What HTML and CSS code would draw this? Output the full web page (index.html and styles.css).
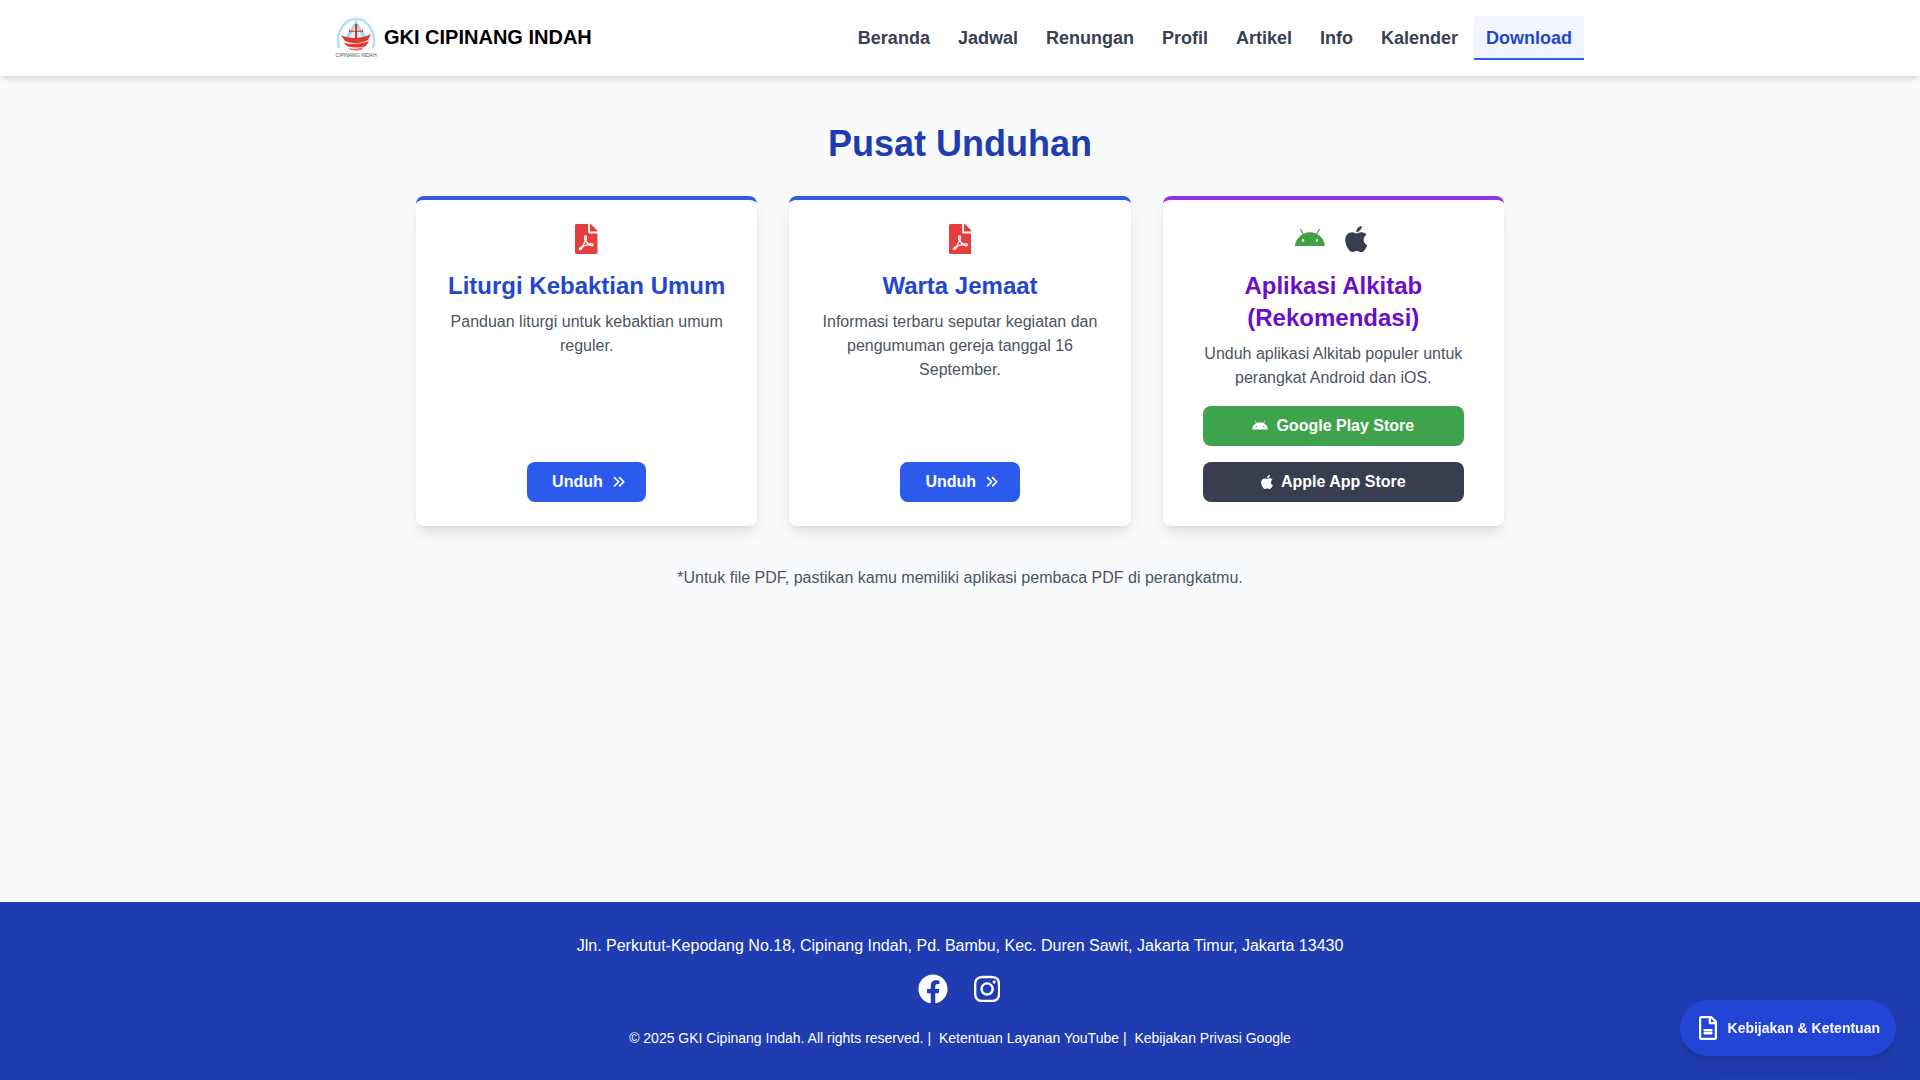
FILE: index.html
```html
<!DOCTYPE html>
<html lang="id">
<head>
<meta charset="UTF-8" />
<meta name="viewport" content="width=device-width, initial-scale=1" />
<title>Pusat Unduhan - GKI Cipinang Indah</title>
<link rel="stylesheet" href="styles.css">
</head>
<body>

<header class="site-header">
  <div class="header-inner">
    <a class="brand" href="#">
      <span class="brand-logo">
        <svg class="logo-mark" viewBox="0 0 40 34" aria-hidden="true">
          <path d="M3 30C-1 15 8 1 20 1s21 14 17 29" fill="none" stroke="#b9def3" stroke-width="2.5"/>
          <path d="M8 22L20 2l12 20z" fill="#a6d6f0"/>
          <path d="M13 20L20 8l7 12z" fill="#dff1fa"/>
          <path d="M19 6h2.2v15H19zM13 11.5l1.5 1.2h11l1.5-1.2v3l-1.5-.8h-11l-1.500.8z" fill="#d9362b"/>
          <path d="M5 17c8 4 20 4 30-1l-3 6c-8 4-16 4-23 1z" fill="#e2392e"/>
          <path d="M8 25c8 2 17 1 25-2l-3 5c-7 2-13 2-19 0z" fill="#e2392e"/>
          <path d="M12 30c5 1 11 1 16-1l-3 3c-3 .6-7 .6-10 0z" fill="#ea6a5f"/>
        </svg>
        <span class="logo-caption">CIPINANG INDAH</span>
      </span>
      <span class="brand-name">GKI CIPINANG INDAH</span>
    </a>
    <nav class="main-nav">
      <a href="#">Beranda</a>
      <a href="#">Jadwal</a>
      <a href="#">Renungan</a>
      <a href="#">Profil</a>
      <a href="#">Artikel</a>
      <a href="#">Info</a>
      <a href="#">Kalender</a>
      <a href="#" class="active">Download</a>
    </nav>
  </div>
</header>

<main class="page">
  <h1>Pusat Unduhan</h1>

  <div class="card-grid">
    <section class="card">
      <div class="card-icons">
        <svg class="icon-pdf" viewBox="0 0 384 512" aria-hidden="true"><path d="M181.9 256.1c-5-16-4.9-46.9-2-46.9 8.4 0 7.6 36.9 2 46.9zm-1.7 47.2c-7.7 20.2-17.3 43.3-28.4 62.7 18.3-7 39-17.2 62.9-21.9-12.7-9.6-24.9-23.4-34.5-40.8zM86.1 428.1c0 .8 13.2-5.4 34.9-40.2-6.7 6.3-29.1 24.5-34.9 40.2zM248 160h136v328c0 13.3-10.7 24-24 24H24c-13.3 0-24-10.7-24-24V24C0 10.7 10.7 0 24 0h200v136c0 13.2 10.8 24 24 24zm-8 171.8c-20-12.2-33.3-29-42.7-53.8 4.5-18.5 11.6-46.6 6.2-64.2-4.7-29.4-42.4-26.5-47.8-6.8-5 18.3-.4 44.1 8.1 77-11.6 27.6-28.7 64.6-40.8 85.8-.1 0-.1.1-.2.1-27.1 13.9-73.6 44.5-54.5 68 5.6 6.9 16 10 21.5 10 17.9 0 35.7-18 61.1-61.8 25.8-8.5 54.1-19.1 79-23.2 21.7 11.8 47.1 19.5 64 19.5 29.2 0 31.2-32 19.7-43.4-13.9-13.6-54.3-9.7-73.6-7.2zM377 105L279 7c-4.5-4.5-10.6-7-17-7h-6v128h128v-6.1c0-6.3-2.5-12.4-7-16.9zm-74.1 255.3c4.1-2.7-2.5-11.9-42.8-9 37.1 15.8 42.8 9 42.8 9z"/></svg>
      </div>
      <h2>Liturgi Kebaktian Umum</h2>
      <p>Panduan liturgi untuk kebaktian umum reguler.</p>
      <div class="card-actions">
        <a href="#" class="btn btn-blue">Unduh
          <svg class="icon-angles" viewBox="0 0 512 512" aria-hidden="true"><path d="M470.6 278.6c12.5-12.5 12.5-32.8 0-45.3l-160-160c-12.5-12.5-32.8-12.5-45.3 0s-12.5 32.8 0 45.3L402.7 256 265.4 393.4c-12.5 12.5-12.5 32.8 0 45.3s32.8 12.5 45.3 0l160-160zm-352 160l160-160c12.5-12.5 12.5-32.8 0-45.3l-160-160c-12.5-12.5-32.8-12.5-45.3 0s-12.5 32.8 0 45.3L210.7 256 73.4 393.4c-12.5 12.5-12.5 32.8 0 45.3s32.8 12.5 45.3 0z"/></svg>
        </a>
      </div>
    </section>

    <section class="card">
      <div class="card-icons">
        <svg class="icon-pdf" viewBox="0 0 384 512" aria-hidden="true"><path d="M181.9 256.1c-5-16-4.9-46.9-2-46.9 8.4 0 7.6 36.9 2 46.9zm-1.7 47.2c-7.7 20.2-17.3 43.3-28.4 62.7 18.3-7 39-17.2 62.9-21.9-12.7-9.6-24.9-23.4-34.5-40.8zM86.1 428.1c0 .8 13.2-5.4 34.9-40.2-6.7 6.3-29.1 24.5-34.9 40.2zM248 160h136v328c0 13.3-10.7 24-24 24H24c-13.3 0-24-10.7-24-24V24C0 10.7 10.7 0 24 0h200v136c0 13.2 10.8 24 24 24zm-8 171.8c-20-12.2-33.3-29-42.7-53.8 4.5-18.5 11.6-46.6 6.2-64.2-4.7-29.4-42.4-26.5-47.8-6.8-5 18.3-.4 44.1 8.1 77-11.6 27.6-28.7 64.6-40.8 85.8-.1 0-.1.1-.2.1-27.1 13.9-73.6 44.5-54.5 68 5.6 6.9 16 10 21.5 10 17.9 0 35.7-18 61.1-61.8 25.8-8.5 54.1-19.1 79-23.2 21.7 11.8 47.1 19.5 64 19.5 29.2 0 31.2-32 19.7-43.4-13.9-13.6-54.3-9.7-73.6-7.2zM377 105L279 7c-4.5-4.5-10.6-7-17-7h-6v128h128v-6.1c0-6.3-2.5-12.4-7-16.9zm-74.1 255.3c4.1-2.7-2.5-11.9-42.8-9 37.1 15.8 42.8 9 42.8 9z"/></svg>
      </div>
      <h2>Warta Jemaat</h2>
      <p>Informasi terbaru seputar kegiatan dan pengumuman gereja tanggal 16 September.</p>
      <div class="card-actions">
        <a href="#" class="btn btn-blue">Unduh
          <svg class="icon-angles" viewBox="0 0 512 512" aria-hidden="true"><path d="M470.6 278.6c12.5-12.5 12.5-32.8 0-45.3l-160-160c-12.5-12.5-32.8-12.5-45.3 0s-12.5 32.8 0 45.3L402.7 256 265.4 393.4c-12.5 12.5-12.5 32.8 0 45.3s32.8 12.5 45.3 0l160-160zm-352 160l160-160c12.5-12.5 12.5-32.8 0-45.3l-160-160c-12.5-12.5-32.8-12.5-45.3 0s-12.5 32.8 0 45.3L210.7 256 73.4 393.4c-12.5 12.5-12.5 32.8 0 45.3s32.8 12.5 45.3 0z"/></svg>
        </a>
      </div>
    </section>

    <section class="card card-purple">
      <div class="card-icons app-icons">
        <svg class="icon-android" viewBox="0 0 576 512" aria-hidden="true"><path d="M420.55,301.93a24,24,0,1,1,24-24,24,24,0,0,1-24,24m-265.1,0a24,24,0,1,1,24-24,24,24,0,0,1-24,24m273.7-144.48,47.94-83a10,10,0,1,0-17.27-10h0l-48.54,84.07a301.25,301.25,0,0,0-246.56,0L116.18,64.45a10,10,0,1,0-17.27,10h0l47.94,83C64.53,202.22,8.24,285.55,0,384H576c-8.24-98.45-64.54-181.78-146.85-226.55"/></svg>
        <svg class="icon-apple" viewBox="0 0 384 512" aria-hidden="true"><path d="M318.7 268.7c-.2-36.7 16.4-64.4 50-84.8-18.8-26.9-47.2-41.7-84.7-44.6-35.5-2.8-74.3 20.7-88.5 20.7-15 0-49.4-19.7-76.4-19.7C63.3 141.2 4 184.8 4 273.5q0 39.3 14.4 81.2c12.8 36.7 59 126.7 107.2 125.2 25.2-.6 43-17.9 75.8-17.9 31.8 0 48.3 17.9 76.4 17.9 48.6-.7 90.4-82.5 102.6-119.3-65.2-30.7-61.7-90-61.7-91.9zm-56.6-164.2c27.3-32.4 24.8-61.9 24-72.5-24.1 1.4-52 16.4-67.9 34.9-17.5 19.8-27.8 44.3-25.6 71.9 26.1 2 49.9-11.4 69.5-34.3z"/></svg>
      </div>
      <h2>Aplikasi Alkitab (Rekomendasi)</h2>
      <p>Unduh aplikasi Alkitab populer untuk perangkat Android dan iOS.</p>
      <div class="card-actions stacked">
        <a href="#" class="btn btn-green">
          <svg class="btn-android" viewBox="0 0 576 512" aria-hidden="true"><path d="M420.55,301.93a24,24,0,1,1,24-24,24,24,0,0,1-24,24m-265.1,0a24,24,0,1,1,24-24,24,24,0,0,1-24,24m273.7-144.48,47.94-83a10,10,0,1,0-17.27-10h0l-48.54,84.07a301.25,301.25,0,0,0-246.56,0L116.18,64.45a10,10,0,1,0-17.27,10h0l47.94,83C64.53,202.22,8.24,285.55,0,384H576c-8.24-98.45-64.54-181.78-146.85-226.55"/></svg>
          Google Play Store
        </a>
        <a href="#" class="btn btn-dark">
          <svg class="btn-apple" viewBox="0 0 384 512" aria-hidden="true"><path d="M318.7 268.7c-.2-36.7 16.4-64.4 50-84.8-18.8-26.9-47.2-41.7-84.7-44.6-35.5-2.8-74.3 20.7-88.5 20.7-15 0-49.4-19.7-76.4-19.7C63.3 141.2 4 184.8 4 273.5q0 39.3 14.4 81.2c12.8 36.7 59 126.7 107.2 125.2 25.2-.6 43-17.9 75.8-17.9 31.8 0 48.3 17.9 76.4 17.9 48.6-.7 90.4-82.5 102.6-119.3-65.2-30.7-61.7-90-61.7-91.9zm-56.6-164.2c27.3-32.4 24.8-61.9 24-72.5-24.1 1.4-52 16.4-67.9 34.9-17.5 19.8-27.8 44.3-25.6 71.9 26.1 2 49.9-11.4 69.5-34.3z"/></svg>
          Apple App Store
        </a>
      </div>
    </section>
  </div>

  <p class="note">*Untuk file PDF, pastikan kamu memiliki aplikasi pembaca PDF di perangkatmu.</p>
</main>

<footer class="site-footer">
  <p class="address">Jln. Perkutut-Kepodang No.18, Cipinang Indah, Pd. Bambu, Kec. Duren Sawit, Jakarta Timur, Jakarta 13430</p>
  <div class="social">
    <a href="#" aria-label="Facebook"><svg class="icon-fb" viewBox="0 0 512 512" aria-hidden="true"><path d="M504 256C504 119 393 8 256 8S8 119 8 256c0 123.78 90.69 226.38 209.25 245V327.69h-63V256h63v-54.64c0-62.15 37-96.48 93.67-96.48 27.14 0 55.52 4.84 55.52 4.84v61h-31.28c-30.8 0-40.41 19.12-40.41 38.73V256h68.78l-11 71.69h-57.78V501C413.31 482.38 504 379.78 504 256z"/></svg></a>
    <a href="#" aria-label="Instagram"><svg class="icon-ig" viewBox="0 0 448 512" aria-hidden="true"><path d="M224.1 141c-63.6 0-114.9 51.3-114.9 114.9s51.3 114.9 114.9 114.9S339 319.5 339 255.9 287.7 141 224.1 141zm0 189.6c-41.1 0-74.7-33.5-74.7-74.7s33.5-74.7 74.7-74.7 74.7 33.5 74.7 74.7-33.6 74.7-74.7 74.7zm146.4-194.3c0 14.9-12 26.8-26.8 26.8-14.9 0-26.8-12-26.8-26.8s12-26.8 26.8-26.8 26.8 12 26.8 26.8zm76.1 27.2c-1.7-35.9-9.9-67.7-36.2-93.9-26.2-26.2-58-34.4-93.9-36.2-37-2.1-147.9-2.1-184.9 0-35.8 1.7-67.6 9.9-93.9 36.1s-34.4 58-36.2 93.9c-2.1 37-2.1 147.9 0 184.9 1.7 35.9 9.9 67.7 36.2 93.9s58 34.4 93.9 36.2c37 2.1 147.9 2.1 184.9 0 35.9-1.7 67.7-9.9 93.9-36.2 26.2-26.2 34.4-58 36.2-93.9 2.1-37 2.1-147.8 0-184.8zM398.8 388c-7.8 19.6-22.9 34.7-42.6 42.6-29.5 11.7-99.5 9-132.1 9s-102.7 2.6-132.1-9c-19.6-7.8-34.7-22.9-42.6-42.6-11.7-29.5-9-99.5-9-132.1s-2.6-102.7 9-132.1c7.8-19.6 22.9-34.7 42.6-42.6 29.5-11.7 99.5-9 132.1-9s102.7-2.6 132.1 9c19.6 7.8 34.7 22.9 42.6 42.6 11.7 29.5 9 99.5 9 132.1s2.7 102.7-9 132.1z"/></svg></a>
  </div>
  <p class="legal">
    <span>&copy; 2025 GKI Cipinang Indah. All rights reserved. |</span>
    <a href="#">Ketentuan Layanan YouTube</a>
    <span>|</span>
    <a href="#">Kebijakan Privasi Google</a>
  </p>
</footer>

<a href="#" class="policy-btn">
  <svg class="icon-doc" viewBox="0 0 384 512" aria-hidden="true"><path d="M369.9 97.9L286 14C277 5 264.8-.1 252.1-.1H48C21.5 0 0 21.5 0 48v416c0 26.5 21.5 48 48 48h288c26.5 0 48-21.5 48-48V131.9c0-12.7-5.1-25-14.1-34zM332.1 128H256V51.9l76.1 76.1zM48 464V48h160v104c0 13.3 10.7 24 24 24h104v288H48zm240-176v28c0 6.6-5.4 12-12 12H108c-6.6 0-12-5.4-12-12v-28c0-6.6 5.4-12 12-12h168c6.6 0 12 5.4 12 12zm0 64v28c0 6.6-5.4 12-12 12H108c-6.6 0-12-5.4-12-12v-28c0-6.6 5.4-12 12-12h168c6.6 0 12 5.4 12 12z"/></svg>
  Kebijakan &amp; Ketentuan
</a>

</body>
</html>
```

FILE: styles.css
```css
* {
  box-sizing: border-box;
}
body {
  margin: 0;
  min-height: 100vh;
  display: flex;
  flex-direction: column;
  font-family: "Liberation Sans", Arial, sans-serif;
  font-size: 16px;
  line-height: 24px;
  background: #f9fafc;
  color: #374151;
}
a {
  text-decoration: none;
  color: inherit;
}
h1, h2, p {
  margin: 0;
}

/* header */
.site-header {
  background: #fff;
  box-shadow: 0 4px 6px -1px rgba(0,0,0,0.1), 0 2px 4px -2px rgba(0,0,0,0.1);
}
.header-inner {
  max-width: 1280px;
  margin: 0 auto;
  padding: 16px;
  display: flex;
  align-items: center;
  justify-content: space-between;
  height: 76px;
}
.brand {
  display: flex;
  align-items: center;
  gap: 8px;
}
.brand-logo {
  width: 40px;
  height: 40px;
  display: flex;
  flex-direction: column;
  align-items: center;
}
.logo-mark {
  width: 40px;
  height: 34px;
  display: block;
}
.logo-caption {
  font-size: 5px;
  line-height: 6px;
  color: #555;
  white-space: nowrap;
}
.brand-name {
  font-size: 20px;
  line-height: 28px;
  font-weight: bold;
  color: #000;
  padding-bottom: 2px;
}
.main-nav {
  display: flex;
  gap: 4px;
}
.main-nav a {
  padding: 8px 12px;
  height: 44px;
  font-size: 18px;
  line-height: 28px;
  font-weight: bold;
  color: #374151;
  border-bottom: 2px solid transparent;
}
.main-nav a.active {
  color: #2447cc;
  background: #f0f5fe;
  border-bottom-color: #2f5be6;
  border-radius: 4px 4px 0 0;
}

/* content */
.page {
  flex: 1;
  width: 100%;
  max-width: 1152px;
  margin: 0 auto;
  padding: 48px 32px;
}
.page h1 {
  font-size: 36px;
  line-height: 40px;
  font-weight: bold;
  color: #1f3cb0;
  text-align: center;
  margin-bottom: 32px;
}
.card-grid {
  display: grid;
  grid-template-columns: repeat(3, 1fr);
  gap: 32px;
}
.card {
  background: #fff;
  border-top: 4px solid #2f5be6;
  border-radius: 8px;
  box-shadow: 0 10px 15px -3px rgba(0,0,0,0.1), 0 4px 6px -4px rgba(0,0,0,0.1);
  padding: 24px;
  display: flex;
  flex-direction: column;
  align-items: center;
  text-align: center;
}
.card-purple {
  border-top-color: #9333ea;
}
.card h2 {
  font-size: 24px;
  line-height: 32px;
  font-weight: bold;
  color: #2447cc;
  margin-bottom: 8px;
}
.card-purple h2 {
  color: #6b0fc4;
}
.card p {
  color: #4b5563;
}
.card-icons {
  height: 30px;
  margin-bottom: 16px;
  display: flex;
  align-items: center;
  justify-content: center;
}
.app-icons {
  gap: 20px;
  padding-right: 4px;
}
.card-icons svg {
  display: block;
}
.icon-pdf {
  width: 22.5px;
  height: 30px;
  fill: #e53e3e;
}
.icon-android {
  width: 30px;
  height: 26.67px;
  fill: #43a047;
}
.icon-apple {
  width: 22.5px;
  height: 30px;
  fill: #383e50;
}
.card-actions {
  margin-top: auto;
  padding-top: 16px;
  width: 100%;
  display: flex;
  flex-direction: column;
  align-items: center;
  gap: 16px;
}
.btn {
  height: 40px;
  padding: 0 24px;
  border-radius: 8px;
  color: #fff;
  font-weight: bold;
  display: inline-flex;
  align-items: center;
  justify-content: center;
}
.stacked .btn {
  width: 100%;
  max-width: 261px;
  gap: 8px;
}
.btn-blue {
  background: #2b5aec;
  padding: 0 21px 0 25px;
}
.btn-green {
  background: #3fa34d;
}
.btn-dark {
  background: #383e50;
}
.icon-angles {
  width: 13.5px;
  height: 13.5px;
  margin-left: 9px;
  fill: #fff;
}
.btn-android {
  width: 16px;
  height: 14px;
  fill: #fff;
}
.btn-apple {
  width: 12px;
  height: 16px;
  fill: #fff;
}
.note {
  margin-top: 40px;
  text-align: center;
  color: #4b5563;
}

/* footer */
.site-footer {
  background: #1f3cb0;
  color: #fff;
  padding: 32px 16px;
  text-align: center;
}
.social {
  margin: 16px 0 24px;
  padding-right: 2px;
  height: 30px;
  display: flex;
  justify-content: center;
  gap: 26px;
}
.social svg {
  display: block;
  height: 30px;
  fill: #fff;
}
.icon-fb {
  width: 30px;
}
.icon-ig {
  width: 26.25px;
}
.legal {
  font-size: 14px;
  line-height: 20px;
}
.legal a {
  margin-left: 4px;
}

/* floating button */
.policy-btn {
  position: fixed;
  right: 24px;
  bottom: 24px;
  height: 56px;
  padding: 0 16px 0 19px;
  border-radius: 28px;
  background: #2345d6;
  color: #fff;
  font-size: 14px;
  font-weight: bold;
  display: flex;
  align-items: center;
  gap: 11px;
  box-shadow: 0 10px 15px -3px rgba(0,0,0,0.1), 0 4px 6px -4px rgba(0,0,0,0.1);
}
.icon-doc {
  width: 18px;
  height: 24px;
  fill: #fff;
}
```
